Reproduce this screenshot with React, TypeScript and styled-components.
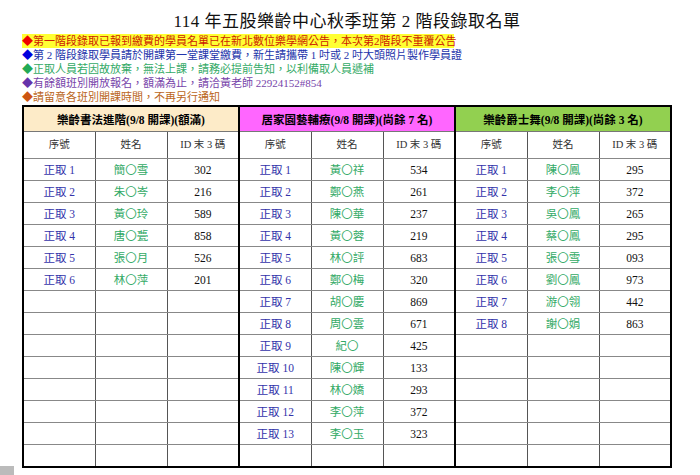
import React from "react";
import styled, { createGlobalStyle } from "styled-components";

const Global = createGlobalStyle`
  html, body { margin: 0; padding: 0; background: #fff; }
  body { font-family: "Liberation Serif", "Noto Sans CJK TC", serif; }
`;

const Page = styled.div`
  width: 700px; height: 475px; position: relative; overflow: hidden;
  padding: 12px 0 0 22px; box-sizing: border-box;
`;
const Title = styled.h1`
  margin: 0 0 2px; width: 650px; text-align: center; font-weight: normal;
  font-size: 17px; line-height: 20px; color: #111; letter-spacing: 0.5px;
`;
const Note = styled.div<{ $c: string; $hl?: boolean }>`
  font-size: 11px; line-height: 14px; color: ${p => p.$c};
  background: ${p => (p.$hl ? "#ffff33" : "transparent")};
  width: ${p => (p.$hl ? "432px" : "auto")}; white-space: nowrap;
`;
const Dia = styled.span<{ $c: string }>` color: ${p => p.$c}; `;
const Table = styled.table`
  margin-top: 1px; border-collapse: collapse; width: 650px; table-layout: fixed;
  border: 2px solid #000;
`;
const Head = styled.th<{ $bg: string }>`
  background: ${p => p.$bg}; height: 24px; font-size: 11.5px; font-weight: bold;
  border-left: 2px solid #000; border-bottom: 1px solid #777; padding: 0;
`;
const Td = styled.td<{ $c?: string; $g?: boolean }>`
  height: 21px; padding: 0; text-align: center; font-size: 11.5px; line-height: 14px;
  color: ${p => p.$c || "#111"};
  border-left: ${p => (p.$g ? "2px solid #000" : "1px solid #555")};
  border-bottom: 1px solid #888;
`;
const Th = styled(Td)`
  height: 26px; font-size: 10.5px; color: #333;
`;
const Corner = styled.div`
  position: absolute; left: 0; bottom: 0; width: 14px; height: 9px; background: #bbb;
`;

const g1 = [["簡〇雪","302"],["朱〇岑","216"],["黃〇玲","589"],["唐〇甍","858"],["張〇月","526"],["林〇萍","201"]];
const g2 = [["黃〇祥","534"],["鄭〇燕","261"],["陳〇華","237"],["黃〇蓉","219"],["林〇評","683"],["鄭〇梅","320"],["胡〇慶","869"],["周〇雲","671"],["紀〇","425"],["陳〇輝","133"],["林〇嬌","293"],["李〇萍","372"],["李〇玉","323"]];
const g3 = [["陳〇鳳","295"],["李〇萍","372"],["吳〇鳳","265"],["蔡〇鳳","295"],["張〇雪","093"],["劉〇鳳","973"],["游〇翎","442"],["謝〇娟","863"]];
const groups = [g1, g2, g3];

export default function App() {
  const rows = Array.from({ length: 14 }, (_, i) => i);
  return (
    <Page>
      <Global />
      <Title>114 年五股樂齡中心秋季班第 2 階段錄取名單</Title>
      <Note $c="#cc2200" $hl><Dia $c="#ee0000">◆</Dia>第一階段錄取已報到繳費的學員名單已在新北數位樂學網公告，本次第2階段不重覆公告</Note>
      <Note $c="#2233aa"><Dia $c="#0000dd">◆</Dia>第 2 階段錄取學員請於開課第一堂課堂繳費，新生請攜帶 1 吋或 2 吋大頭照片製作學員證</Note>
      <Note $c="#33aa66"><Dia $c="#22aa55">◆</Dia>正取人員若因故放棄，無法上課，請務必提前告知，以利備取人員遞補</Note>
      <Note $c="#7744aa"><Dia $c="#6633aa">◆</Dia>有餘額班別開放報名，額滿為止，請洽黃老師 22924152#854</Note>
      <Note $c="#bb6622"><Dia $c="#cc5511">◆</Dia>請留意各班別開課時間，不再另行通知</Note>
      <Table>
        <thead>
          <tr>
            <Head colSpan={3} $bg="#fdebc8">樂齡書法進階(9/8 開課)(額滿)</Head>
            <Head colSpan={3} $bg="#ff66ff">居家園藝輔療(9/8 開課)(尚餘 7 名)</Head>
            <Head colSpan={3} $bg="#92d050">樂齡爵士舞(9/8 開課)(尚餘 3 名)</Head>
          </tr>
        </thead>
        <tbody>
          <tr>
            {groups.map((_, gi) => (
              <React.Fragment key={gi}>
                <Th $g>序號</Th><Th>姓名</Th><Th>ID 末 3 碼</Th>
              </React.Fragment>
            ))}
          </tr>
          {rows.map(i => (
            <tr key={i}>
              {groups.map((g, gi) => {
                const r = g[i];
                return (
                  <React.Fragment key={gi}>
                    <Td $g $c="#3333aa">{r ? `正取 ${i + 1}` : "\u00a0"}</Td>
                    <Td $c="#33aa66">{r ? r[0] : "\u00a0"}</Td>
                    <Td>{r ? r[1] : "\u00a0"}</Td>
                  </React.Fragment>
                );
              })}
            </tr>
          ))}
        </tbody>
      </Table>
      <Corner />
    </Page>
  );
}
